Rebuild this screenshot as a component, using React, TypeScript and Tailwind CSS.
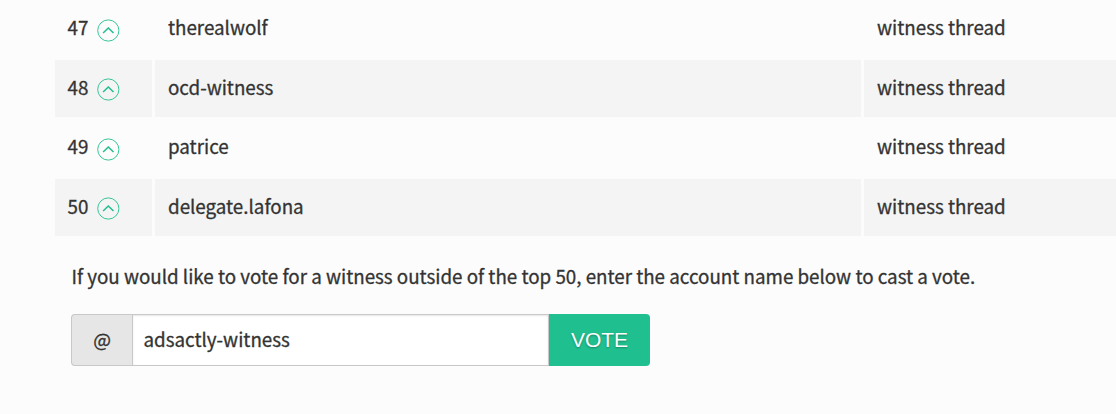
import { useState } from "react";

const witnesses = [
  { rank: 47, name: "therealwolf" },
  { rank: 48, name: "ocd-witness" },
  { rank: 49, name: "patrice" },
  { rank: 50, name: "delegate.lafona" },
];

function ChevronUpCircle() {
  return (
    <svg width="23" height="23" viewBox="0 0 23 23" fill="none" stroke="#20bf8f">
      <circle cx="11.3" cy="11.5" r="10.6" strokeWidth="0.9" />
      <path d="M6.1 14 11.3 9l5.2 5" strokeWidth="1.5" />
    </svg>
  );
}

export default function App() {
  const [account, setAccount] = useState("adsactly-witness");

  return (
    <div className="h-[414px] w-full overflow-hidden bg-[#fcfcfc] pl-[55px] font-['Noto_Sans_CJK_SC',sans-serif] text-[18.78px] leading-[30px] text-[#333] [-webkit-text-stroke:0.3px_#333]">
      <div className="flex flex-col gap-[2.5px] pt-[0.5px]">
        {witnesses.map((w, i) => (
          <div key={w.rank} className="grid h-[57px] grid-cols-[97px_706px_1fr] gap-[3px]">
            <div className={`flex items-center pb-[3.5px] pl-3 ${i % 2 ? "bg-[#f4f4f4]" : ""}`}>
              <span className="w-[30px] pl-[0.5px]">{w.rank}</span>
              <button type="button" className="mt-[5.5px]">
                <ChevronUpCircle />
              </button>
            </div>
            <div className={`flex items-center pb-[3.5px] pl-[13px] ${i % 2 ? "bg-[#f4f4f4]" : ""}`}>{w.name}</div>
            <div className={`flex items-center pb-[3.5px] pl-[13px] ${i % 2 ? "bg-[#f4f4f4]" : ""}`}>witness thread</div>
          </div>
        ))}
      </div>
      <div className="pl-4 pt-[25px]">
        <p className="whitespace-nowrap pl-[0.5px]">
          If you would like to vote for a witness outside of the top 50, enter the account name below to cast a vote.
        </p>
        <form className="mt-[23px] flex h-[52px]" onSubmit={(e) => e.preventDefault()}>
          <span className="flex w-[61px] items-center justify-center rounded-l-[4px] border border-r-0 border-[#c8c8c8] bg-[#e6e6e6] pb-[3px] pl-[0.5px]">@</span>
          <input
            className="w-[417px] border border-[#c8c8c8] bg-white px-[10.5px] pb-[2px] shadow-[inset_0_1px_2px_rgba(10,10,10,0.1)] outline-none"
            value={account}
            onChange={(e) => setAccount(e.target.value)}
          />
          <button
            type="submit"
            className="w-[101px] rounded-r-[4px] bg-[#20bf8f] font-['Liberation_Sans',sans-serif] text-[21px] text-white [-webkit-text-stroke:0] [text-shadow:0_1px_2px_rgba(0,0,0,0.3)]"
          >
            VOTE
          </button>
        </form>
      </div>
    </div>
  );
}
